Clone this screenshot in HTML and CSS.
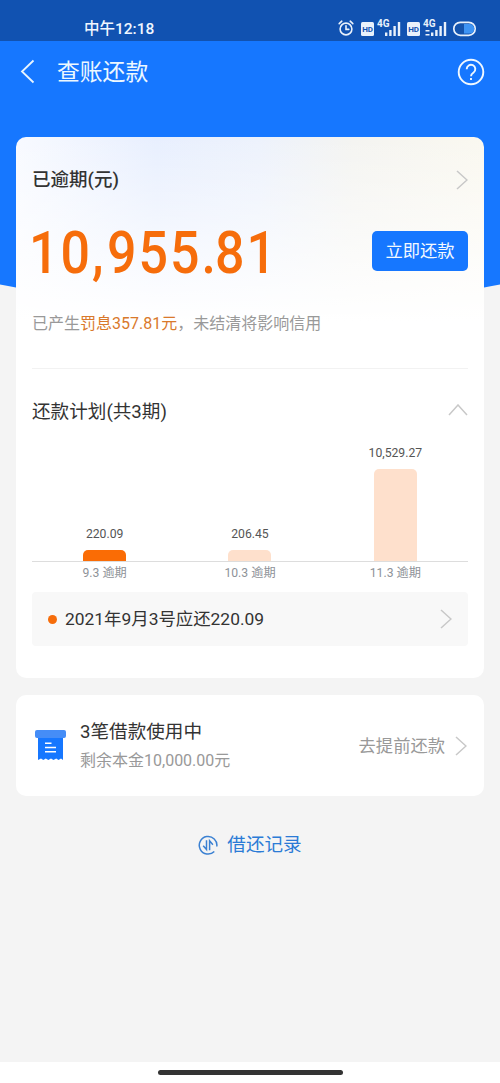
FILE: index.html
```html
<!DOCTYPE html>
<html lang="zh-CN">
<head>
<meta charset="utf-8">
<meta name="viewport" content="width=device-width, initial-scale=1">
<title>查账还款</title>
<link rel="stylesheet" href="styles.css">
</head>
<body>
<div class="screen">
  <div class="status">
    <span class="time">中午12:18</span>
    <svg class="status-icons" width="140" height="20" viewBox="0 0 140 20" fill="none">
      <g stroke="#e9f1fb" stroke-width="1.6" stroke-linecap="round">
        <circle cx="8" cy="11" r="5.9"/>
        <path d="M8 7.8v3.6h2.8M1.2 5.7l2.6-2.5M14.8 5.7l-2.6-2.5"/>
      </g>
      <g fill="#e9f1fb">
        <rect x="23" y="4" width="13" height="14" rx="1.5"/>
        <rect x="69" y="4" width="13" height="14" rx="1.5"/>
        <rect x="47" y="14.500" width="2.400" height="3.500"/><rect x="51.200" y="12" width="2.400" height="6"/><rect x="55.400" y="8" width="2.400" height="10"/><rect x="59.800" y="4" width="2.400" height="14"/>
        <rect x="87.500" y="12" width="4" height="1.500"/><rect x="87.500" y="16" width="4" height="1.500"/><rect x="93" y="14.500" width="2.400" height="3.500"/><rect x="97.200" y="12" width="2.400" height="6"/><rect x="101.400" y="8" width="2.400" height="10"/><rect x="105.800" y="4" width="2.400" height="14"/>
      </g>
      <g class="hd"><text x="24.200" y="13.800">HD</text><text x="70.200" y="13.800">HD</text></g>
      <g class="net"><text x="39" y="9">4G</text><text x="85" y="9">4G</text></g>
      <rect x="115.800" y="4.300" width="21.400" height="13" rx="6.500" fill="#1453ad" stroke="#e9f1fb" stroke-width="1.700"/>
      <path d="M126 6h5.500a4.800 4.800 0 0 1 0 9.600H126z" fill="#3e94f5"/>
    </svg>
  </div>
  <header class="nav">
    <svg width="16" height="26" viewBox="0 0 16 26" fill="none"><path d="M13.500 1.500L2 12.500l11.500 11" stroke="#e8f5ff" stroke-width="1.800"/></svg>
    <h1>查账还款</h1>
    <svg width="28" height="28" viewBox="0 0 28 28" fill="none" stroke="#f0f8ff" stroke-width="1.900"><circle cx="14" cy="14" r="12.300"/><path d="M9.700 11.200a4.300 4.300 0 1 1 6.900 3.300c-1.700 1.200-2.600 1.700-2.600 3.700"/><path d="M14 20v2"/></svg>
  </header>
  <div class="arc"></div>

  <main>
    <section class="card bill">
      <div class="row bill-head">
        <h2>已逾期(元)</h2>
        <svg class="chev" width="12" height="20" viewBox="0 0 12 20"><path d="M1 1l10 9-10 9"/></svg>
      </div>
      <div class="row amount-row">
        <span class="amount">10<span class="comma">,</span>955<span class="dot">.</span>81</span>
        <button class="pay">立即还款</button>
      </div>
      <p class="note">已产生<em>罚息357.81元</em>，未结清将影响信用</p>
      <div class="row plan-head">
        <h3>还款计划(共3期)</h3>
        <svg class="chev" width="20" height="12" viewBox="0 0 20 12"><path d="M1 11l9-10 9 10"/></svg>
      </div>
      <div class="chart">
        <div class="col"><span class="value">220.09</span><i class="bar active" style="height:11px"></i></div>
        <div class="col"><span class="value">206.45</span><i class="bar" style="height:11px"></i></div>
        <div class="col"><span class="value">10,529.27</span><i class="bar" style="height:92px"></i></div>
      </div>
      <div class="axis"><span>9.3 逾期</span><span>10.3 逾期</span><span>11.3 逾期</span></div>
      <div class="due">
        <i class="bullet"></i><span class="due-text">2021年9月3号应还220.09</span>
        <svg class="chev" width="12" height="20" viewBox="0 0 12 20"><path d="M1 1l10 9-10 9"/></svg>
      </div>
    </section>

    <section class="card loan">
      <svg width="31" height="31" viewBox="0 0 31 31"><path d="M3 5h25v25l-2-1.500-2.500 1.500-2.300-1.500-2.700 1.500-2.500-1.500-2.700 1.500-2.500-1.500-2.500 1.500-2.300-1.500L3 30z" fill="#1677ff"/><rect width="31" height="8" rx="2" fill="#458df7"/><path d="M10 13.300h6.500M10 17.500h11M10 21.800h11" stroke="#fff" stroke-width="1.500"/></svg>
      <div class="loan-text">
        <strong>3笔借款使用中</strong>
        <span>剩余本金10,000.00元</span>
      </div>
      <span class="early">去提前还款</span>
      <svg class="chev" width="12" height="20" viewBox="0 0 12 20"><path d="M1 1l10 9-10 9"/></svg>
    </section>

    <a class="records">
      <svg width="20" height="20" viewBox="0 0 20 20" fill="none" stroke="#3a80d2" stroke-width="1.500"><path d="M16.300 16.500A8.800 8.800 0 1 1 18.800 11.500"/><path d="M5.200 10.800l3.300 3.700V5.300M11.600 15.200V5.800l3.300 3.900"/></svg>
      <span>借还记录</span>
    </a>
  </main>
  <footer class="gesture"><i></i></footer>
</div>
</body>
</html>
```
FILE: styles.css
```css
* { box-sizing: border-box; }
body, h1, h2, h3, p { margin: 0; }
body {
  font-family: Roboto, "Noto Sans CJK SC", sans-serif;
  color: #333;
  background: #f4f4f4;
}
svg { display: block; flex: none; }
.screen {
  height: 1083px;
  display: flex;
  flex-direction: column;
  overflow: hidden;
}
.status {
  height: 41px;
  flex: none;
  display: flex;
  justify-content: space-between;
  padding: 18px 22px 0 84px;
  background: #1152b1;
  color: #f0f6ff;
}
.time { font-size: 15.5px; line-height: 22px; font-weight: 500; white-space: nowrap; }
.hd text { font: 700 8px Roboto, sans-serif; fill: #1152b1; }
.net text { font: 700 10px Roboto, sans-serif; fill: #e9f1fb; }
.nav {
  height: 62px;
  flex: none;
  display: flex;
  align-items: center;
  padding: 0 15px 0 20px;
  background: #1677ff;
  color: #edf8ff;
}
.nav h1 { flex: 1; margin-left: 21px; padding-top: 2px; font-size: 22.8px; line-height: 30px; font-weight: 400; }
.arc {
  height: 198px;
  flex: none;
  margin: 0 -30px -164px;
  background: #1677ff;
  border-radius: 0 0 50% 50% / 0 0 30px 30px;
}
main {
  flex: 1;
  display: flex;
  flex-direction: column;
  padding: 0 16px;
  position: relative;
}
.card { background: #fff; border-radius: 10px; }
.row { display: flex; align-items: center; justify-content: space-between; }
.bill {
  height: 541px;
  padding: 0 16px;
  background:
    linear-gradient(to bottom, rgba(255,255,255,0), #fff 185px),
    linear-gradient(to right, #f8faff 0, #e8effe 30%, #edf2fc 52%, #f4f4f1 72%, #faf8f0 100%);
}
.bill-head { height: 84px; padding-top: 1px; }
.bill-head h2 { padding-bottom: 3px; font-size: 18.5px; font-weight: 500; }
.chev { fill: none; stroke: #c8c8c8; stroke-width: 1.5; }
.amount-row { height: 60px; }
.amount {
  margin-left: -3px;
  padding-top: 4px;
  font-size: 60px;
  line-height: 60px;
  font-weight: 500;
  letter-spacing: 2.3px;
  color: #f66d0b;
  white-space: nowrap;
  transform: scaleX(0.865);
  transform-origin: left;
}
.comma, .dot { display: inline-block; letter-spacing: 0; }
.comma { width: 17.4px; }
.dot { width: 15.5px; }
.pay {
  width: 96px;
  height: 40px;
  border: 0;
  padding: 0 0 3px;
  border-radius: 5px;
  background: #1677ff;
  color: #f4faff;
  font: 17.3px Roboto, "Noto Sans CJK SC", sans-serif;
}
.note {
  height: 88px;
  padding-top: 31px;
  border-bottom: 1px solid #f2f2f2;
  font-size: 16px;
  line-height: 24px;
  color: #999;
  white-space: nowrap;
}
.note em { font-style: normal; color: #d9792c; }
.plan-head { height: 84px; }
.plan-head h3 { padding-bottom: 4px; font-size: 18.6px; font-weight: 400; }
.plan-head .chev { margin-bottom: 2px; }
.chart {
  height: 109px;
  display: grid;
  grid-template: 108px / repeat(3, 1fr);
  border-bottom: 1px solid #ddd;
}
.col { min-height: 0; display: flex; flex-direction: column; align-items: center; justify-content: flex-end; }
.value { flex: none; margin-bottom: 8px; font-size: 12.2px; line-height: 16px; color: #555; }
.bar { flex: none; width: 43px; border-radius: 5px 5px 0 0; background: #fee0cc; }
.bar.active { background: #fa6c05; }
.axis {
  height: 20px;
  display: grid;
  grid-template-columns: repeat(3, 1fr);
  text-align: center;
  font-size: 12.2px;
  line-height: 22px;
  color: #8e9298;
}
.due {
  height: 54px;
  margin-top: 10px;
  padding: 0 16px;
  display: flex;
  align-items: center;
  border-radius: 4px;
  background: #f8f8f8;
  font-size: 17.4px;
}
.bullet { width: 9px; height: 9px; margin-right: 8px; border-radius: 50%; background: #f66d0b; }
.due-text { flex: 1; padding-bottom: 3px; }
.loan {
  height: 101px;
  margin-top: 17px;
  padding: 0 17px 0 19px;
  display: flex;
  align-items: center;
}
.loan-text { flex: 1; margin-left: 14px; display: flex; flex-direction: column; }
.loan-text strong { font-size: 18.6px; line-height: 30px; font-weight: 400; }
.loan-text span { font-size: 16px; line-height: 28px; color: #999; }
.early { margin-right: 10px; padding-bottom: 2px; font-size: 17.3px; color: #999; }
.records {
  margin-top: 35px;
  display: flex;
  align-items: center;
  justify-content: center;
  gap: 9px;
  font-size: 18.6px;
  line-height: 28px;
  color: #2b7bd6;
}
.gesture {
  height: 21px;
  flex: none;
  display: flex;
  justify-content: center;
  align-items: center;
  background: #fff;
}
.gesture i { width: 185px; height: 5px; border-radius: 3px; background: #333; }
```
